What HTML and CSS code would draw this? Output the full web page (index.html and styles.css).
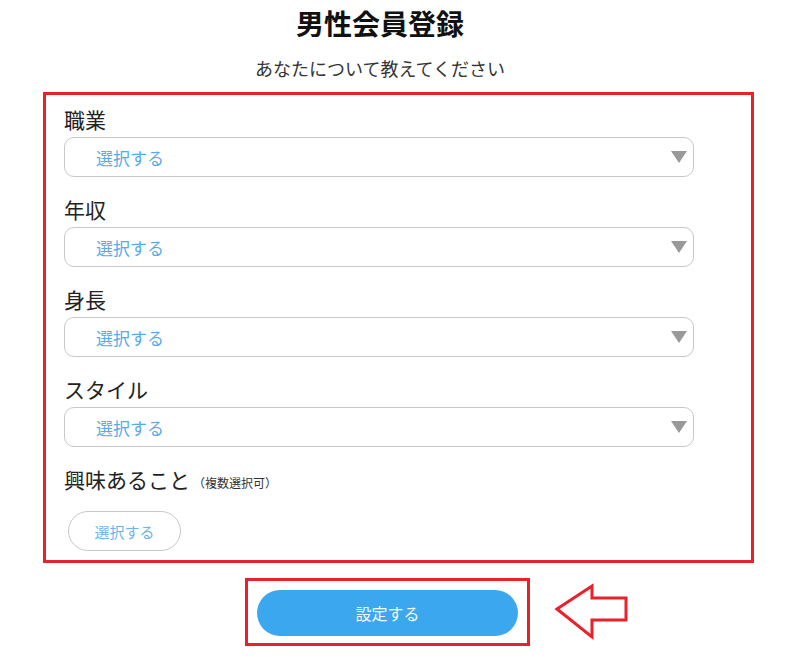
FILE: index.html
```html
<!DOCTYPE html>
<html lang="ja">
<head>
<meta charset="utf-8">
<title>男性会員登録</title>
<link rel="stylesheet" href="styles.css">
</head>
<body>
<div class="page">
  <h1 class="title">男性会員登録</h1>
  <p class="subtitle">あなたについて教えてください</p>
  <div class="form-box">
    <div class="field">
      <div class="label">職業</div>
      <div class="select"><span class="placeholder">選択する</span><span class="caret"></span></div>
    </div>
    <div class="field">
      <div class="label">年収</div>
      <div class="select"><span class="placeholder">選択する</span><span class="caret"></span></div>
    </div>
    <div class="field">
      <div class="label">身長</div>
      <div class="select"><span class="placeholder">選択する</span><span class="caret"></span></div>
    </div>
    <div class="field">
      <div class="label">スタイル</div>
      <div class="select"><span class="placeholder">選択する</span><span class="caret"></span></div>
    </div>
    <div class="field last">
      <div class="label">興味あること<span class="note">（複数選択可）</span></div>
      <div class="pill">選択する</div>
    </div>
  </div>
  <div class="submit-row">
    <div class="submit-box">
      <div class="submit">設定する</div>
    </div>
    <svg class="arrow" width="76" height="58" viewBox="0 0 76 58">
      <polygon points="3,26 38,3 38,15 72,15 72,37 38,37 38,54" fill="none" stroke="#e8212b" stroke-width="3"/>
    </svg>
  </div>
</div>
</body>
</html>
```
FILE: styles.css
```css
html, body {
  margin: 0;
  padding: 0;
  background: #fff;
}
body {
  font-family: "Noto Sans CJK JP", "Noto Sans", sans-serif;
  color: #222;
}
.page {
  width: 800px;
  padding-top: 5px;
}
.title {
  margin: 0;
  padding-right: 40px;
  font-size: 28px;
  line-height: 36px;
  font-weight: 700;
  text-align: center;
  color: #111;
}
.subtitle {
  margin: 14px 0 0;
  padding-right: 40px;
  font-size: 18px;
  line-height: 26px;
  text-align: center;
  color: #333;
}
.form-box {
  margin: 11px 0 0 43px;
  width: 687px;
  border: 3px solid #e8212b;
  padding: 10px 0 9px 18px;
}
.field {
  margin-bottom: 18px;
}
.field.last {
  margin-bottom: 0;
}
.label {
  font-size: 21px;
  line-height: 28px;
  color: #222;
  margin-bottom: 4px;
  display: flex;
  align-items: baseline;
}
.note {
  font-size: 12px;
  color: #333;
  margin-left: 3px;
}
.select {
  width: 630px;
  height: 40px;
  box-sizing: border-box;
  border: 1px solid #c8c8c8;
  border-radius: 10px;
  display: flex;
  align-items: center;
  justify-content: space-between;
  padding: 0 6px 0 31px;
}
.placeholder {
  font-size: 17px;
  color: #5aaae8;
}
.caret {
  width: 0;
  height: 0;
  border-left: 8px solid transparent;
  border-right: 8px solid transparent;
  border-top: 12px solid #999;
}
.label + .pill {
  margin-top: 14px;
}
.pill {
  margin-left: 4px;
  width: 113px;
  height: 40px;
  box-sizing: border-box;
  border: 1px solid #c8c8c8;
  border-radius: 20px;
  display: flex;
  align-items: center;
  justify-content: center;
  font-size: 15px;
  color: #6cb4ec;
}
.submit-row {
  margin-top: 15px;
  padding-left: 245px;
  display: flex;
  align-items: flex-start;
}
.submit-box {
  width: 285px;
  height: 68px;
  box-sizing: border-box;
  border: 3px solid #e8212b;
  padding: 9px 0 0 9px;
}
.submit {
  width: 261px;
  height: 46px;
  border-radius: 23px;
  background: #3aa7ef;
  color: #f4f9ff;
  font-size: 16px;
  display: flex;
  align-items: center;
  justify-content: center;
}
.arrow {
  margin-left: 24px;
  margin-top: 5px;
  display: block;
}
```
